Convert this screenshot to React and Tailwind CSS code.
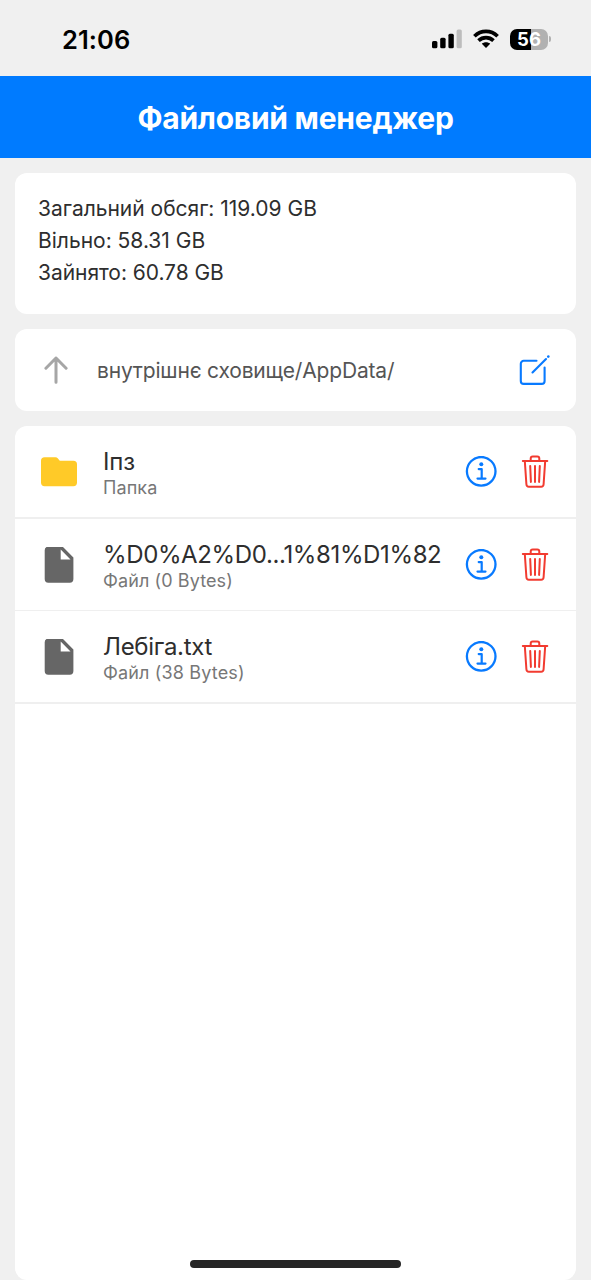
const storage = [
  { text: 'Загальний обсяг: 119.09 GB', spacing: 'tracking-[-0.01px]' },
  { text: 'Вільно: 58.31 GB', spacing: 'tracking-[0px]' },
  { text: 'Зайнято: 60.78 GB', spacing: 'tracking-[-0.05px]' },
];

const files = [
  { name: 'Іпз', meta: 'Папка', folder: true, row: 'h-[93px] border-b-2', nameSpacing: 'tracking-[-0.2px]', metaSpacing: 'tracking-[0.1px]' },
  { name: '%D0%A2%D0...1%81%D1%82', meta: 'Файл (0 Bytes)', row: 'h-[92px] border-b', nameSpacing: 'tracking-[-0.37px]', metaSpacing: 'tracking-[0.1px]' },
  { name: 'Лебіга.txt', meta: 'Файл (38 Bytes)', row: 'h-[93px] border-b-2', nameSpacing: 'tracking-[-0.3px]', metaSpacing: 'tracking-[0.15px]' },
];

function SignalIcon() {
  return (
    <svg className="h-[20px] w-[30px]" viewBox="0 0 30 20">
      <rect x="0" y="12" width="5.4" height="7.3" rx="1.5" />
      <rect x="8.2" y="8.7" width="5.4" height="10.600" rx="1.5" />
      <rect x="16.4" y="4.700" width="5.4" height="14.600" rx="1.5" />
      <rect x="24.6" y="0.5" width="5.2" height="18.800" rx="1.5" fill="#bdbdbd" />
    </svg>
  );
}

function WifiIcon() {
  return (
    <svg className="h-[20px] w-[26px]" viewBox="0 0 26 20" fill="none" stroke="#000" strokeWidth="3.700">
      <path d="M1.4 7.2C8 .7 18 .7 24.6 7.2" />
      <path d="M5.5 11.600c4.300-4 10.700-4 15 0" />
      <path d="M8.800 14.700c2.500-2 5.900-2 8.400 0L13 19z" fill="#000" stroke="none" />
    </svg>
  );
}

function Battery() {
  return (
    <div className="flex items-center gap-[1px]">
      <div className="flex h-[21px] w-[38px] items-center justify-center rounded-[7px] bg-[linear-gradient(90deg,#000_56%,#b1b1b1_56%)] text-[18.500px] font-bold leading-none text-white">
        56
      </div>
      <div className="h-[6px] w-[2px] rounded-r-full bg-[#b1b1b1]" />
    </div>
  );
}

function ArrowUp() {
  return (
    <svg className="h-[30px] w-[24px]" viewBox="0 0 24 30" fill="none" stroke="#a6a6a6" strokeWidth="3" strokeLinecap="round" strokeLinejoin="round">
      <path d="M1.9 13.200 12 3l10.1 10.200M12 3v24.200" />
    </svg>
  );
}

function EditIcon() {
  return (
    <svg className="h-[32px] w-[32px]" viewBox="0 0 32 32" fill="none" stroke="#087aff" strokeWidth="2.100" strokeLinecap="round">
      <path d="M17.500 6.800H4.700A2.900 2.900 0 0 0 1.800 9.700V27a2.900 2.900 0 0 0 2.900 2.900h18a2.900 2.900 0 0 0 2.900-2.900V13.500" />
      <path d="M13.500 18.500 27 5" />
      <path d="m29.200 2.700.2-.2" strokeWidth="2.500" />
    </svg>
  );
}

function FolderIcon() {
  return (
    <svg className="h-[30px] w-[36px]" viewBox="0 0 36 30" fill="#ffca28">
      <path d="M3.600.2h10.800c1 0 1.700.3 2.300 1L18.800 3.700h13.600A3.600 3.600 0 0 1 36 7.300v18.300a3.600 3.600 0 0 1-3.600 3.600H3.600A3.600 3.600 0 0 1 0 25.600V3.800A3.600 3.600 0 0 1 3.600.2z" />
    </svg>
  );
}

function FileIcon() {
  return (
    <svg className="h-[36px] w-[30px]" viewBox="-0.7 0.3 30 36" fill="#666">
      <path fillRule="evenodd" d="M3.600 0H18L28.700 10.800v21.600a3.600 3.600 0 0 1-3.600 3.600H3.600A3.600 3.600 0 0 1 0 32.400V3.600A3.600 3.600 0 0 1 3.600 0zM16 2.900v9.800h9.800z" />
    </svg>
  );
}

function InfoIcon() {
  return (
    <svg className="h-[32px] w-[32px]" viewBox="0 0.7 32 32" fill="none" stroke="#087aff" strokeWidth="2.300" strokeLinecap="round" strokeLinejoin="round">
      <circle cx="16.200" cy="16" r="14.300" />
      <path d="M13.700 13.800h3v9.400M12.500 23.300h8" strokeWidth="2.200" />
      <circle cx="16.300" cy="9" r="2" fill="#087aff" stroke="none" />
    </svg>
  );
}

function TrashIcon() {
  return (
    <svg className="h-[34px] w-[28px]" viewBox="0 0.3 28 34" fill="none" stroke="#f23b30" strokeWidth="2" strokeLinecap="round" strokeLinejoin="round">
      <path d="M1.800 6.300h24.500M3.800 6.300l1.600 23.300c.1 1.700.9 2.500 2.500 2.500h12.200c1.600 0 2.400-.8 2.500-2.500L24.200 6.300" />
      <path d="M9.700 6.200V3.900c0-1.300.7-2 2-2h4.600c1.300 0 2 .7 2 2v2.300" />
      <path d="m9.200 11.200.7 16M14 11.200v16M18.800 11.200l-.7 16" />
    </svg>
  );
}

export default function App() {
  return (
    <div className="flex h-[1280px] w-[591px] flex-col overflow-hidden bg-[#f0f0f0] font-['Inter',sans-serif] text-[#2e2e2e]">
      <div className="flex h-[76px] shrink-0 items-center justify-between pl-[62px] pr-[40px] pt-[2px] text-black">
        <div className="pt-[2px] text-[25.500px] font-semibold leading-none tracking-[0.1px]">21:06</div>
        <div className="flex items-center gap-[11px]">
          <SignalIcon />
          <WifiIcon />
          <Battery />
        </div>
      </div>

      <header className="flex h-[82px] shrink-0 items-center justify-center bg-[#007bff] pt-[2px]">
        <h1 className="whitespace-nowrap text-[30px] font-bold leading-none tracking-[-0.25px] text-white">Файловий менеджер</h1>
      </header>

      <main className="flex min-h-0 grow flex-col gap-[15px] px-[15px] pt-[15px]">
        <section className="h-[141px] shrink-0 rounded-xl bg-white px-[23px] pt-[20px]">
          {storage.map((line) => (
            <p key={line.text} className={`text-[21px] leading-[32px] ${line.spacing}`}>{line.text}</p>
          ))}
        </section>

        <section className="flex h-[82px] shrink-0 items-center rounded-xl bg-white pl-[29px] pr-[25px]">
          <ArrowUp />
          <p className="ml-[29px] grow text-[21px] leading-none tracking-[-0.18px] text-[#555]">внутрішнє сховище/AppData/</p>
          <EditIcon />
        </section>

        <section className="flex grow flex-col rounded-xl bg-white">
          {files.map((file) => (
            <div key={file.name} className={`flex shrink-0 items-center border-[#efefef] pl-[26px] pr-[27px] ${file.row}`}>
              <div className="flex w-[36px] justify-center">{file.folder ? <FolderIcon /> : <FileIcon />}</div>
              <div className="ml-[26px] grow whitespace-nowrap pt-[3px]">
                <div className={`text-[24px] leading-[28px] ${file.nameSpacing}`}>{file.name}</div>
                <div className={`text-[18px] leading-[23px] text-[#777] ${file.metaSpacing}`}>{file.meta}</div>
              </div>
              <div className="flex items-center gap-[24px]">
                <InfoIcon />
                <TrashIcon />
              </div>
            </div>
          ))}
          <div className="mb-[12px] mt-auto h-[8px] w-[211px] self-center rounded-full bg-[#262626]" />
        </section>
      </main>
    </div>
  );
}
